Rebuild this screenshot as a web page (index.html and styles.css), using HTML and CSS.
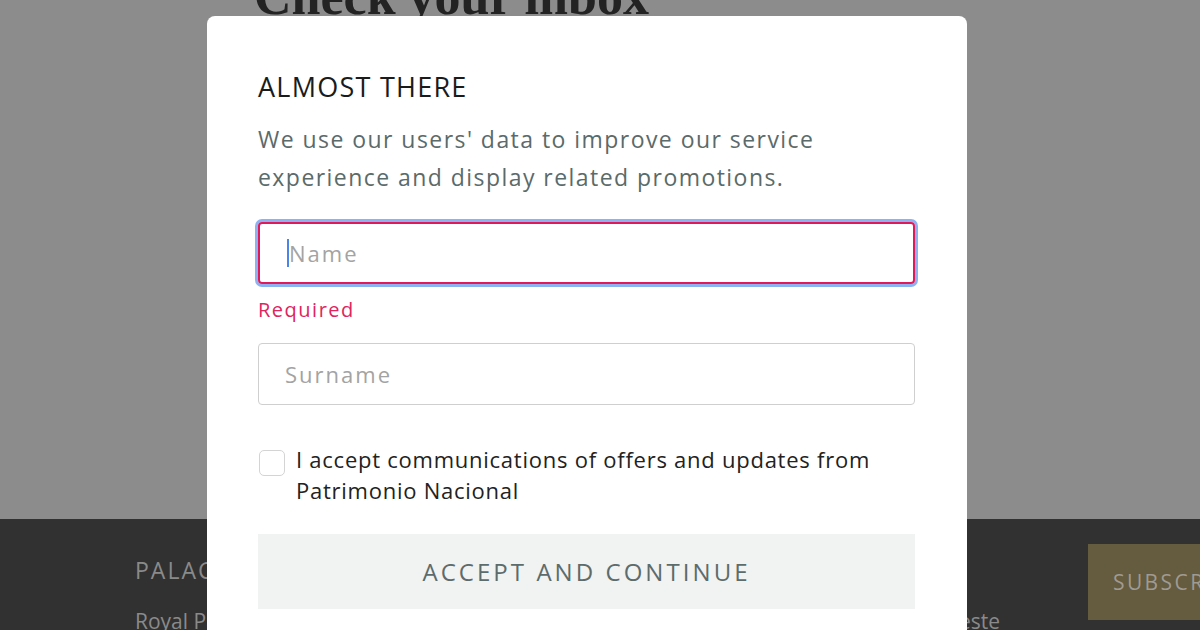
FILE: index.html
```html
<!DOCTYPE html>
<html lang="en">
<head>
<meta charset="utf-8">
<title>Almost there</title>
<link rel="stylesheet" href="styles.css">
</head>
<body>
<div class="page">
  <section class="hero">
    <h1 class="hero-title">Check your inbox</h1>
  </section>
  <footer class="footer">
    <div class="col col-palaces">
      <div class="col-head">PALACES</div>
      <div class="col-text">Royal Palace of Madrid</div>
    </div>
    <div class="col col-info">
      <div class="col-head">INFORMATION</div>
      <div class="col-text col-text-right">Parque del Oeste</div>
    </div>
    <div class="subscribe">SUBSCRIBE</div>
  </footer>
</div>

<div class="modal">
  <h2 class="modal-title">ALMOST THERE</h2>
  <p class="modal-text">We use our users' data to improve our service<br>experience and display related promotions.</p>
  <div class="field field-error">
    <span class="caret"></span><span class="placeholder">Name</span>
  </div>
  <div class="error-text">Required</div>
  <div class="field field-plain">
    <span class="placeholder">Surname</span>
  </div>
  <div class="check-row">
    <span class="checkbox"></span>
    <span class="check-label">I accept communications of offers and updates from<br>Patrimonio Nacional</span>
  </div>
  <div class="btn">ACCEPT AND CONTINUE</div>
</div>
</body>
</html>
```

FILE: styles.css
```css
html, body {
  margin: 0;
  padding: 0;
  height: 630px;
  overflow: hidden;
}

body {
  font-family: "Open Sans", "Liberation Sans", sans-serif;
  background: #8c8c8c;
}

.page {
  display: flex;
  flex-direction: column;
  height: 630px;
}

.hero {
  height: 519px;
  flex-shrink: 0;
  background: #8c8c8c;
  padding-left: 254px;
  overflow: hidden;
}

.hero-title {
  margin: -29px 0 0 0;
  font-family: "Liberation Serif", serif;
  font-weight: bold;
  font-size: 52px;
  line-height: 52px;
  color: #232323;
}

.footer {
  flex: 1;
  background: #313131;
  display: flex;
  align-items: flex-start;
  padding: 25px 0 0 135px;
  overflow: hidden;
}

.col {
  flex-shrink: 0;
  padding-top: 11px;
  color: #8a8a8a;
}

.col-head {
  font-size: 23px;
  line-height: 30px;
  letter-spacing: 2px;
}

.col-text {
  margin-top: 22px;
  font-size: 21px;
  line-height: 28px;
  white-space: nowrap;
}

.col-palaces {
  width: 300px;
}

.col-info {
  margin-left: 265px;
  width: 300px;
}

.col-text-right {
  text-align: right;
}

.subscribe {
  margin-left: 88px;
  width: 200px;
  height: 76px;
  flex-shrink: 0;
  background: #655b3f;
  color: #9f9a92;
  font-size: 21px;
  letter-spacing: 2.4px;
  line-height: 76px;
  padding-left: 25px;
  box-sizing: border-box;
}

/* modal */
.modal {
  position: absolute;
  left: 207px;
  top: 16px;
  width: 760px;
  height: 640px;
  box-sizing: border-box;
  background: #ffffff;
  border-radius: 8px;
  padding: 54px 52px 0 51px;
}

.modal-title {
  margin: 0;
  font-weight: 400;
  font-size: 27px;
  line-height: 34px;
  letter-spacing: 1.25px;
  color: #1b1b1b;
}

.modal-text {
  margin: 16px 0 0 0;
  font-size: 23px;
  line-height: 38px;
  letter-spacing: 1.45px;
  color: #5b6a6a;
}

.field {
  height: 62px;
  box-sizing: border-box;
  border-radius: 4px;
  display: flex;
  align-items: center;
  padding-left: 26px;
}

.field-error {
  margin-top: 26px;
  border: 2px solid #df1a5b;
  box-shadow: 0 0 0 3px #8cb2f2;
  padding-left: 27px;
}

.field-plain {
  margin-top: 20px;
  border: 1.5px solid #cfcfcf;
}

.placeholder {
  font-size: 22px;
  letter-spacing: 2px;
  color: #a3a3a3;
}

.caret {
  display: inline-block;
  width: 2px;
  height: 28px;
  background: #4a86e8;
  margin-right: 0;
}

.error-text {
  margin-top: 13px;
  font-size: 20px;
  line-height: 26px;
  letter-spacing: 1.5px;
  color: #e0245e;
}

.check-row {
  margin-top: 39px;
  display: flex;
  align-items: flex-start;
  gap: 11px;
}

.checkbox {
  flex-shrink: 0;
  width: 26px;
  height: 26px;
  box-sizing: border-box;
  margin-top: 6px;
  margin-left: 1px;
  border: 1.5px solid #d4d4d4;
  border-radius: 5px;
  background: #fff;
}

.check-label {
  font-size: 22px;
  line-height: 31px;
  letter-spacing: 0.75px;
  color: #222222;
}

.btn {
  margin-top: 28px;
  height: 75px;
  background: #f1f2f2;
  display: flex;
  align-items: center;
  justify-content: center;
  font-size: 24px;
  letter-spacing: 3.05px;
  color: #5c6b6b;
}
```
